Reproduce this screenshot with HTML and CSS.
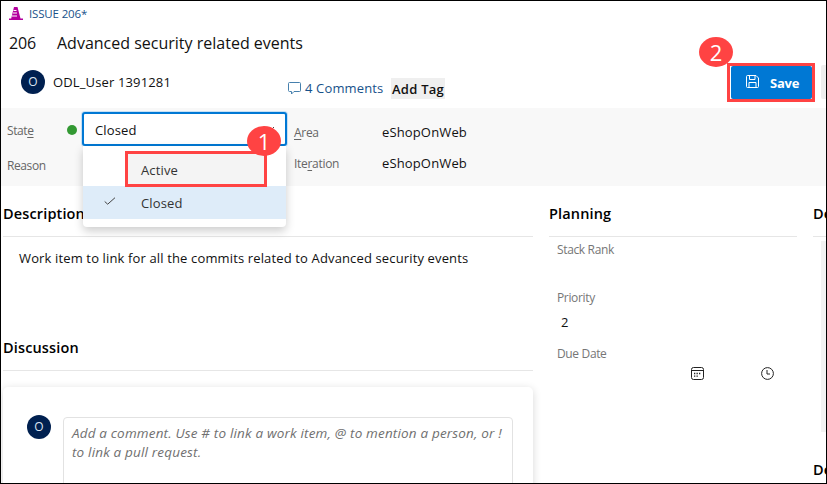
FILE: index.html
```html
<!DOCTYPE html>
<html lang="en">
<head>
<meta charset="utf-8">
<title>Issue 206</title>
<link rel="stylesheet" href="styles.css">
</head>
<body>
<div class="page">
  <div class="tab">
    <svg class="cone" width="14" height="13" viewBox="0 0 14 13"><path fill="#b4009e" d="M5 0h3.500l3 11.500H14V13H0v-1.500h2.200z"/><path fill="none" stroke="#fff" d="M4.500 3.500h3M4 6h4M3 9h5"/></svg>
    <span class="tab-name">ISSUE 206*</span>
  </div>
  <div class="title-row"><span class="id">206</span><span class="title">Advanced security related events</span></div>
  <div class="tools">
    <span class="avatar">O</span>
    <span class="user">ODL_User 1391281</span>
    <svg class="bubble" width="14" height="13" viewBox="0 0 14 13" fill="none" stroke="#4680ad"><path d="M1.500.5h10q1 0 1 1v7q0 1-1 1H6L3.500 12V9.500h-2q-1 0-1-1v-7q0-1 1-1z"/></svg>
    <span class="comments">4 Comments</span>
    <span class="add-tag">Add Tag</span>
    <div class="save-frame">
      <div class="save">
        <svg width="13" height="13" viewBox="0 0 13 13" fill="none" stroke="#fff"><path d="M1.500.5h8.500l2.500 2.500v8.500q0 1-1 1h-10q-1 0-1-1v-10q0-1 1-1zM3.500.5v4h5.500v-4M3 12.500V7.500h7v5"/></svg>
        <span>Save</span>
      </div>
      <span class="badge badge-two">2</span>
    </div>
    <div class="next-button"></div>
  </div>
  <div class="band">
    <div class="labels">
      <div class="state">Stat<u>e</u></div>
      <div class="reason">Reason</div>
    </div>
    <span class="dot"></span>
    <div class="select">
      <span class="value">Closed</span>
      <svg class="chevron" width="12" height="8" viewBox="0 0 12 8" fill="none" stroke="#444"><path d="M1 1l5 5 5-5"/></svg>
      <div class="menu">
        <div class="option active">Active</div>
        <div class="option selected"><svg width="12" height="8" viewBox="0 0 12 8" fill="none" stroke="#444"><path d="M.7 4.500l3 2.700L11 .7"/></svg>Closed</div>
        <div class="mark"></div>
      </div>
      <span class="badge badge-one">1</span>
    </div>
    <div class="names"><div class="area"><u>A</u>rea</div><div class="iteration">Ite<u>r</u>ation</div></div>
    <div class="paths"><div>eShopOnWeb</div><div>eShopOnWeb</div></div>
  </div>
  <div class="main">
    <section class="left">
      <h2 class="h-desc">Description</h2>
      <p class="text">Work item to link for all the commits related to Advanced security events</p>
      <h2 class="h-disc">Discussion</h2>
      <div class="card">
        <span class="avatar">O</span>
        <div class="editor"><div class="line-one">Add a comment. Use # to link a work item, @ to mention a person, or !</div><div class="line-two">to link a pull request.</div></div>
      </div>
    </section>
    <section class="middle">
      <h2 class="h-plan">Planning</h2>
      <div class="field rank">Stack Rank</div>
      <div class="field priority">Priority</div>
      <div class="number">2</div>
      <div class="field due">Due Date</div>
      <div class="date">
        <svg width="13" height="13" viewBox="0 0 13 13" fill="none" stroke="#222"><rect x=".5" y=".5" width="12" height="12" rx="2"/><path d="M.5 3.500h12"/><path stroke-width="1.300" stroke-dasharray="1.300 1.200" d="M3 6.500h7M3 9.200h4.500"/></svg>
        <svg width="13" height="13" viewBox="0 0 13 13" fill="none" stroke="#222"><circle cx="6.500" cy="6.500" r="5.900"/><path d="M6 3v4h3"/></svg>
      </div>
    </section>
    <section class="right">
      <h2>De</h2>
      <div class="panel"></div>
      <h2 class="h-dev">De</h2>
    </section>
  </div>
</div>
</body>
</html>
```
FILE: styles.css
```css
* { box-sizing: border-box; }
body { margin: 0; font: 13px/20px "Open Sans", "Noto Sans", sans-serif; color: #111; letter-spacing: .14px; }
.page { width: 827px; height: 484px; border: 1px solid #000; overflow: hidden; background: #fff; display: flex; flex-direction: column; white-space: nowrap; }
svg { display: block; flex: none; }
.tab { height: 26px; padding-left: 8px; display: flex; align-items: center; gap: 6px; flex: none; }
.cone { margin-top: -1px; }
.tab-name { font-size: 11.5px; color: #17518a; letter-spacing: -.15px; }
.title-row { height: 31px; flex: none; padding-left: 8px; display: flex; align-items: center; font-size: 16px; }
.id { width: 48px; letter-spacing: -.1px; }
.title { letter-spacing: 0; }
.tools { height: 50px; flex: none; display: flex; align-items: flex-start; }
.avatar { width: 24px; height: 24px; flex: none; border-radius: 50%; background: #002050; color: #dbe4f0; font-size: 12px; line-height: 24px; text-align: center; }
.tools > .avatar { margin: 12px 0 0 20px; }
.user { width: 235px; margin: 14px 0 0 8px; }
.bubble { margin-top: 24px; }
.comments { width: 86px; margin: 20px 0 0 3px; color: #17518a; }
.add-tag { width: 54px; height: 21px; margin-top: 20px; padding-left: 1px; line-height: 22px; background: #efefef; font-weight: 600; letter-spacing: .25px; }
.save-frame { width: 88px; height: 39px; margin: 5px 0 0 282px; border: 3px solid #ff4343; position: relative; background: #fff; padding: 0 0 0 1px; }
.save { height: 33px; width: 81px; background: #0078d4; border-radius: 2px; color: #fff; font-weight: 700; letter-spacing: -.2px; display: flex; align-items: center; gap: 11px; padding: 0 0 2px 15px; }
.save span { padding-top: 3px; }
.badge { position: absolute; width: 34px; height: 30px; border-radius: 50%; background: #ff4343; color: #fff; font: 22px/30px "Open Sans", sans-serif; text-align: center; }
.badge-two { left: -31px; top: -29px; }
.next-button { width: 5px; height: 34px; margin: 7px 0 0 6px; background: #eee; border-radius: 2px 0 0 2px; }
.band { height: 78px; flex: none; background: #f8f8f8; display: flex; align-items: flex-start; }
.labels { width: 61px; padding: 13px 0 0 6px; font-size: 12px; color: #666; letter-spacing: -.4px; }
.reason { margin-top: 15px; }
.dot { width: 10px; height: 10px; border-radius: 50%; background: #339933; margin: 17px 0 0 5px; }
.select { width: 205px; height: 34px; margin: 4px 0 0 5px; border: 2px solid #0078d4; border-radius: 3px; box-shadow: 0 0 0 1px #c7e0f4; background: #fff; position: relative; padding: 6px 0 0 11px; }
.chevron { position: absolute; right: 10px; top: 12px; }
.menu { position: absolute; left: -1px; top: 32px; width: 203px; height: 81px; padding-top: 7px; border-radius: 0 0 4px 4px; background: #fff; box-shadow: 0 4px 10px rgba(0,0,0,.2); z-index: 1; }
.option { height: 33px; line-height: 34px; padding-left: 58px; color: #333; }
.active { background: linear-gradient(#f4f4f4, #f4f4f4) 43px 0 / 140px 33px no-repeat; }
.selected { background: #deecf9; display: flex; padding-left: 21px; }
.selected svg { margin: 11px 25px 0 0; }
.mark { position: absolute; left: 42px; top: 5px; width: 142px; height: 36px; border: 3px solid #ff4343; }
.badge-one { left: 163px; top: 12px; z-index: 2; }
.names { width: 95px; padding: 15px 0 0 7px; font-size: 12px; color: #666; letter-spacing: -.3px; }
.iteration { margin-top: 11px; }
.paths { padding-top: 15px; line-height: 31px; margin-top: -6px; }
u { text-underline-offset: 2px; }
.main { flex: 1; min-height: 0; display: flex; gap: 16px; padding-left: 2px; }
.left { width: 530px; flex: none; }
.middle { width: 248px; flex: none; }
h2 { margin: 0; height: 51px; border-bottom: 1px solid #e6e6e6; font-size: 14.5px; font-weight: 600; line-height: 56px; color: #000; }
.text { margin: 11px 0 0 16px; }
.h-disc { margin-top: 52px; height: 51px; line-height: 55px; }
.card { margin-top: 16px; height: 130px; border-radius: 5px; box-shadow: 0 2px 8px rgba(0,0,0,.16); display: flex; padding: 28px 20px 0 24px; gap: 12px; }
.editor { margin-top: 2px; flex: 1; border: 1px solid #e2e2e2; border-radius: 4px; padding: 6px 0 0 8px; font-size: 13.5px; letter-spacing: .17px; line-height: 19px; font-style: italic; color: #707070; }
.field { padding-left: 8px; color: #767676; font-size: 12px; line-height: 18px; letter-spacing: -.35px; }
.rank { margin-top: 4px; }
.priority { margin-top: 30px; }
.number { margin: 5px 0 0 12px; }
.due { margin-top: 13px; }
.date { display: flex; gap: 57px; margin: 4px 0 0 142px; }
.right { width: 13px; flex: none; overflow: hidden; }
.panel { margin: 4px 0 0 8px; height: 191px; background: #f2f2f2; }
.h-dev { line-height: 76px; border: 0; }
```
